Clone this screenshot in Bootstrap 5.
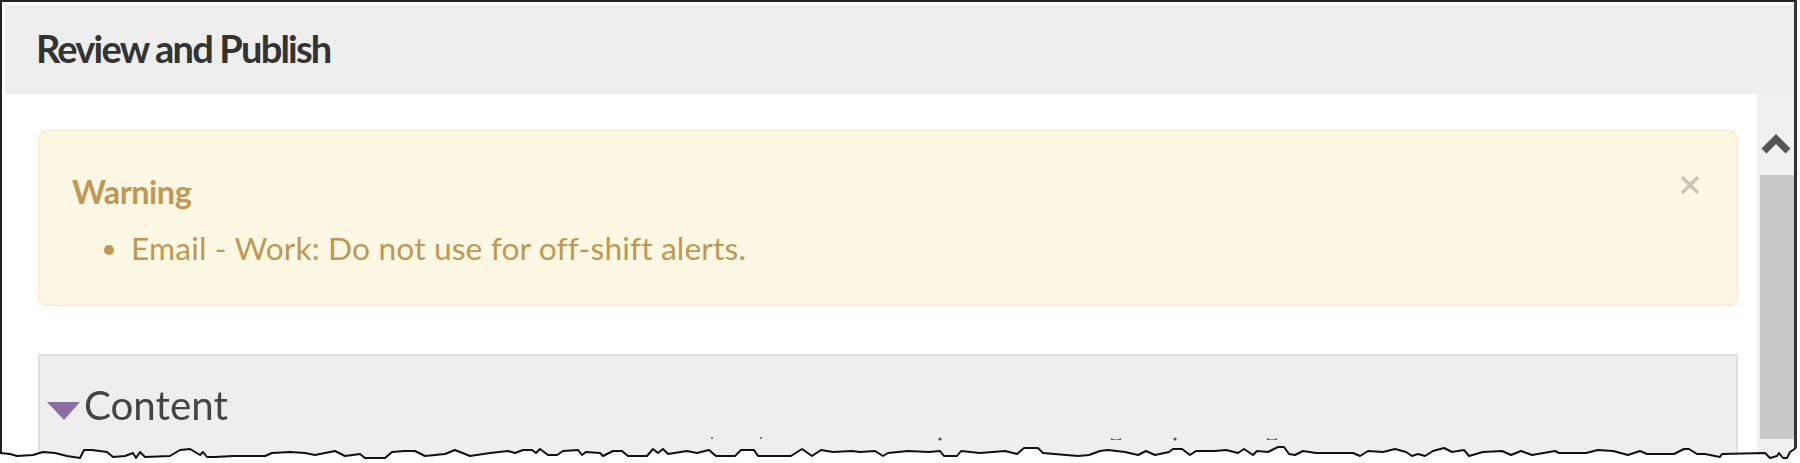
<!DOCTYPE html>
<html lang="en">
<head>
<meta charset="utf-8">
<title>Review and Publish</title>
<link href="https://cdn.jsdelivr.net/npm/bootstrap@5.3.0/dist/css/bootstrap.min.css" rel="stylesheet">
<style>
html,body{margin:0;background:#fff;}
body{width:1800px;height:463px;overflow:hidden;font-family:Lato,"Open Sans",sans-serif;}
.shot{position:relative;width:1797px;height:463px;border-top:2.5px solid #222;border-left:2.5px solid #222;border-right:3px solid #333;background:#fff;padding-top:3px;filter:blur(.5px);}
.dlg-head{height:89px;margin-left:3px;background:#eee;padding-left:31px;color:#333;font-size:38px;font-weight:700;line-height:86px;letter-spacing:-1.8px;}
.dlg-body{height:370px;}
.dlg-main{padding:36px 19px 0 36px;}
.warn-box{height:176px;background:#fcf8e3;border:2px solid #fbeed5;border-radius:8px;color:#c09853;padding:37px 32px 0;margin:0;}
.warn-title{font-size:32.5px;font-weight:700;line-height:46px;letter-spacing:-.5px;margin-bottom:9px;}
.warn-list{margin:0;padding-left:59px;font-size:31.8px;line-height:48px;letter-spacing:.1px;}
.warn-close{position:absolute;right:94px;top:173px;width:20px;height:20px;}
.sect{margin-top:48px;height:120px;background:#eee;border:2px solid #e0e0e0;border-bottom:0;padding:26px 0 0 7px;color:#444;font-size:40.3px;line-height:46px;}
.sect svg{margin:20px 4px 0 0;}
.vscroll{width:37px;background:#f0f0f0;}
.vs-btn{height:81px;}
.vs-btn svg{margin-top:37px;}
.vs-thumb{height:264px;margin-left:3px;background:#c9c9c9;}
.tear{position:absolute;left:0;top:0;pointer-events:none;filter:blur(.4px);}
</style>
</head>
<body>
<div class="shot">
  <div class="dlg-head">Review and Publish</div>
  <div class="dlg-body d-flex">
    <div class="dlg-main flex-grow-1">
      <div class="warn-box alert" role="alert">
        <div class="warn-title">Warning</div>
        <ul class="warn-list"><li>Email - Work: Do not use for off-shift alerts.</li></ul>
      </div>
      <div class="sect d-flex align-items-start">
        <svg width="33" height="18" viewBox="0 0 33 18" class="flex-shrink-0"><path d="M0 0H33L17 18Z" fill="#8c6f9e"/></svg><span>Content</span>
      </div>
    </div>
    <div class="vscroll flex-shrink-0 d-flex flex-column">
      <div class="vs-btn d-flex justify-content-center align-items-start"><svg width="30" height="24" viewBox="0 0 30 24"><path d="M3 20 15 8 27 20" fill="none" stroke="#555" stroke-width="7"/></svg></div>
      <div class="vs-thumb"></div>
    </div>
  </div>
  <svg class="warn-close" viewBox="0 0 20 20"><path d="M2 2 18 18M18 2 2 18" stroke="#c9c6b3" stroke-width="3.4" fill="none"/></svg>
</div>
<svg class="tear" width="1800" height="463" viewBox="0 0 1800 463">
  <g fill="#555"><circle cx="712" cy="438" r="1"/><circle cx="761" cy="438" r="1"/><circle cx="940" cy="439" r="1.6"/><path d="M1111 438q5 3 10 0v2h-10Z"/><circle cx="1175" cy="439" r="1.6"/><path d="M1267 438q5 3 10 0v2h-10Z"/></g>
  <polygon fill="#fff" points="0,453 10,454 17,456 33,455 43,452 55,453 67,456 80,458 84,450 92,450 107,452 113,457 125,456 133,453 136,458 140,452 145,457 170,456 180,450 190,449 200,455 203,452 207,457 215,457 233,456 265,456 272,453 290,452 305,453 315,455 325,453 335,451 345,456 360,454 365,458 385,458 392,452 405,451 415,451 425,456 445,454 455,450 470,456 490,453 508,451 515,453 523,450 532,450 536,453 540,449 548,455 557,455 563,451 578,450 582,455 586,452 600,453 603,456 613,451 622,451 628,456 647,456 653,449 658,453 663,449 668,454 687,451 697,453 709,450 716,456 735,456 741,450 754,450 758,456 791,456 802,449 812,456 821,450 833,452 852,451 860,452 875,451 883,456 888,453 908,451 929,452 940,451 944,456 957,456 961,451 980,453 1005,451 1017,454 1024,448 1038,448 1043,453 1066,455 1078,456 1089,455 1100,451 1108,450 1125,452 1138,455 1146,451 1155,455 1169,452 1173,449 1182,449 1190,455 1196,451 1215,451 1226,450 1238,453 1244,449 1253,455 1257,451 1268,452 1278,447 1284,447 1289,454 1295,455 1303,451 1316,453 1353,453 1360,456 1368,451 1383,452 1395,449 1406,452 1412,456 1418,454 1425,456 1433,451 1444,448 1452,452 1464,450 1469,456 1483,452 1502,451 1511,455 1521,451 1532,455 1555,451 1559,453 1586,453 1598,450 1613,451 1628,455 1640,451 1647,454 1674,454 1684,449 1689,449 1697,454 1705,454 1720,457 1722,454 1765,453 1770,458 1777,456 1779,453 1783,458 1787,458 1790,452 1796,448 1800,448 1800,463 0,463"/>
  <polyline fill="none" stroke="#111" stroke-width="2" stroke-linejoin="round" points="0,453 10,454 17,456 33,455 43,452 55,453 67,456 80,458 84,450 92,450 107,452 113,457 125,456 133,453 136,458 140,452 145,457 170,456 180,450 190,449 200,455 203,452 207,457 215,457 233,456 265,456 272,453 290,452 305,453 315,455 325,453 335,451 345,456 360,454 365,458 385,458 392,452 405,451 415,451 425,456 445,454 455,450 470,456 490,453 508,451 515,453 523,450 532,450 536,453 540,449 548,455 557,455 563,451 578,450 582,455 586,452 600,453 603,456 613,451 622,451 628,456 647,456 653,449 658,453 663,449 668,454 687,451 697,453 709,450 716,456 735,456 741,450 754,450 758,456 791,456 802,449 812,456 821,450 833,452 852,451 860,452 875,451 883,456 888,453 908,451 929,452 940,451 944,456 957,456 961,451 980,453 1005,451 1017,454 1024,448 1038,448 1043,453 1066,455 1078,456 1089,455 1100,451 1108,450 1125,452 1138,455 1146,451 1155,455 1169,452 1173,449 1182,449 1190,455 1196,451 1215,451 1226,450 1238,453 1244,449 1253,455 1257,451 1268,452 1278,447 1284,447 1289,454 1295,455 1303,451 1316,453 1353,453 1360,456 1368,451 1383,452 1395,449 1406,452 1412,456 1418,454 1425,456 1433,451 1444,448 1452,452 1464,450 1469,456 1483,452 1502,451 1511,455 1521,451 1532,455 1555,451 1559,453 1586,453 1598,450 1613,451 1628,455 1640,451 1647,454 1674,454 1684,449 1689,449 1697,454 1705,454 1720,457 1722,454 1765,453 1770,458 1777,456 1779,453 1783,458 1787,458 1790,452 1796,448"/>
</svg>
<script src="https://cdn.jsdelivr.net/npm/bootstrap@5.3.0/dist/js/bootstrap.bundle.min.js"></script>
</body>
</html>
